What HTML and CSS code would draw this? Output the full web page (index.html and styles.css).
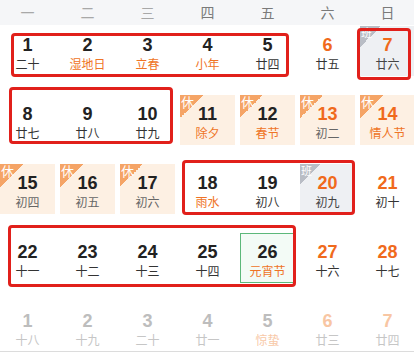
FILE: index.html
```html
<!DOCTYPE html>
<html lang="zh">
<head>
<meta charset="utf-8">
<link rel="stylesheet" href="styles.css">
</head>
<body>
<div class="page">
  <div class="week">
    <span class="wd light">一</span><span class="wd light">二</span><span class="wd light">三</span><span class="wd">四</span><span class="wd">五</span><span class="wd">六</span><span class="wd">日</span>
  </div>
  <div class="grid">
    <div class="cell"><span class="n">1</span><span class="l">二十</span></div>
    <div class="cell"><span class="n">2</span><span class="l fest">湿地日</span></div>
    <div class="cell"><span class="n">3</span><span class="l fest">立春</span></div>
    <div class="cell"><span class="n">4</span><span class="l fest">小年</span></div>
    <div class="cell"><span class="n">5</span><span class="l">廿四</span></div>
    <div class="cell"><span class="n we">6</span><span class="l">廿五</span></div>
    <div class="cell work"><span class="badge grey">班</span><span class="n we">7</span><span class="l">廿六</span></div>

    <div class="cell"><span class="n">8</span><span class="l">廿七</span></div>
    <div class="cell"><span class="n">9</span><span class="l">廿八</span></div>
    <div class="cell"><span class="n">10</span><span class="l">廿九</span></div>
    <div class="cell hol"><span class="badge">休</span><span class="n">11</span><span class="l fest">除夕</span></div>
    <div class="cell hol"><span class="badge">休</span><span class="n">12</span><span class="l fest">春节</span></div>
    <div class="cell hol"><span class="badge">休</span><span class="n we">13</span><span class="l">初二</span></div>
    <div class="cell hol"><span class="badge">休</span><span class="n we">14</span><span class="l fest">情人节</span></div>

    <div class="cell hol"><span class="badge">休</span><span class="n">15</span><span class="l">初四</span></div>
    <div class="cell hol"><span class="badge">休</span><span class="n">16</span><span class="l">初五</span></div>
    <div class="cell hol"><span class="badge">休</span><span class="n">17</span><span class="l">初六</span></div>
    <div class="cell"><span class="n">18</span><span class="l fest">雨水</span></div>
    <div class="cell"><span class="n">19</span><span class="l">初八</span></div>
    <div class="cell work"><span class="badge grey">班</span><span class="n we">20</span><span class="l">初九</span></div>
    <div class="cell"><span class="n we">21</span><span class="l">初十</span></div>

    <div class="cell"><span class="n">22</span><span class="l">十一</span></div>
    <div class="cell"><span class="n">23</span><span class="l">十二</span></div>
    <div class="cell"><span class="n">24</span><span class="l">十三</span></div>
    <div class="cell"><span class="n">25</span><span class="l">十四</span></div>
    <div class="cell today"><span class="n">26</span><span class="l fest">元宵节</span></div>
    <div class="cell"><span class="n we">27</span><span class="l">十六</span></div>
    <div class="cell"><span class="n we">28</span><span class="l">十七</span></div>

    <div class="cell next"><span class="n">1</span><span class="l">十八</span></div>
    <div class="cell next"><span class="n">2</span><span class="l">十九</span></div>
    <div class="cell next"><span class="n">3</span><span class="l">二十</span></div>
    <div class="cell next"><span class="n">4</span><span class="l">廿一</span></div>
    <div class="cell next"><span class="n">5</span><span class="l fest">惊蛰</span></div>
    <div class="cell next"><span class="n we">6</span><span class="l">廿三</span></div>
    <div class="cell next"><span class="n we">7</span><span class="l">廿四</span></div>
  </div>

  <div class="mark mark-a"></div>
  <div class="mark mark-b"></div>
  <div class="mark mark-c"></div>
  <div class="mark mark-d"></div>
  <div class="mark mark-e"></div>
</div>
</body>
</html>
```

FILE: styles.css
```css
* { box-sizing: border-box; }
html, body { margin: 0; padding: 0; background: #fff; }
body { width: 414px; height: 352px; overflow: hidden; }

.page {
  position: relative;
  width: 414px;
  height: 352px;
  border-bottom: 1px solid #dcdcdc;
  font-family: "Liberation Sans", "Noto Sans CJK SC", sans-serif;
}

.week {
  display: grid;
  grid-template-columns: repeat(7, 55px);
  column-gap: 5px;
  height: 25px;
  background: #f5f6f8;
  align-items: center;
}
.wd {
  text-align: center;
  font-family: "Noto Sans CJK SC", sans-serif;
  font-size: 14px;
  line-height: 25px;
  color: #7a7a7a;
}
.wd.light { color: #a8a8a8; }

.grid {
  display: grid;
  grid-template-columns: repeat(7, 55px);
  grid-auto-rows: 50px;
  column-gap: 5px;
  row-gap: 19px;
  padding-top: 1px;
}

.cell {
  position: relative;
  display: flex;
  flex-direction: column;
  align-items: center;
  padding-top: 9px;
}
.n {
  font-family: "Liberation Sans", Arial, sans-serif;
  font-weight: bold;
  font-size: 18px;
  line-height: 20px;
  color: #222;
}
.n.we { color: #f06a1c; }
.l {
  font-family: "Noto Sans CJK SC", sans-serif;
  font-size: 12px;
  line-height: 17px;
  color: #333;
}
.l.fest { color: #ef7426; }

.hol { background: #fdf0e3; }
.hol .l { color: #666; }
.hol .l.fest { color: #ef7426; }

.work { background: #eef0f3; }
.work .l { color: #444; }

.today {
  background: #f3fbf6;
  border: 1px solid #5cb87a;
  padding-top: 8px;
}

.next .n { color: #bdbdbd; }
.next .n.we { color: #f8c6a3; }
.next .l { color: #c6c6c6; }
.next .l.fest { color: #f8c9a8; }

.badge {
  position: absolute;
  left: 0;
  top: 0;
  width: 23px;
  height: 23px;
  padding: 0 0 0 1px;
  background: linear-gradient(to bottom right, #f5a466 50%, transparent 50%);
  color: #fff;
  font-family: "Noto Sans CJK SC", sans-serif;
  font-size: 13px;
  line-height: 14px;
}
.badge.grey {
  width: 21px;
  height: 21px;
  background: linear-gradient(to bottom right, #b9bdc5 50%, transparent 50%);
  font-size: 11px;
  line-height: 12px;
}

.mark {
  position: absolute;
  border: 3px solid #e1201b;
  border-radius: 4px;
}
.mark-a { left: 11px; top: 33px; width: 278px; height: 44px; }
.mark-b { left: 357px; top: 28px; width: 54px; height: 52px; }
.mark-c { left: 9px; top: 87px; width: 164px; height: 57px; }
.mark-d { left: 182px; top: 160px; width: 173px; height: 55px; }
.mark-e { left: 8px; top: 225px; width: 288px; height: 62px; }
```
